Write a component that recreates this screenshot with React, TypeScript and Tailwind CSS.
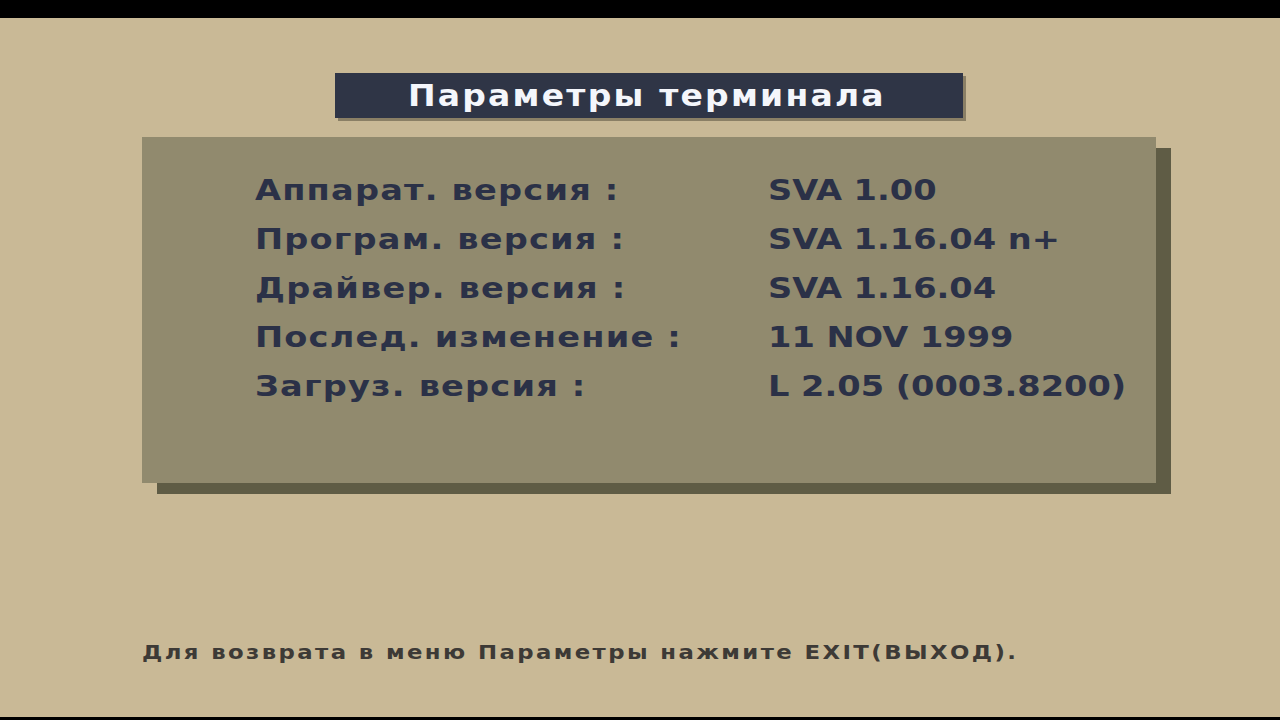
import React from "react";

const rows: [string, string][] = [
  ["Аппарат. версия :", "SVA 1.00"],
  ["Програм. версия :", "SVA 1.16.04 n+"],
  ["Драйвер. версия :", "SVA 1.16.04"],
  ["Послед. изменение :", "11 NOV 1999"],
  ["Загруз. версия :", "L 2.05 (0003.8200)"],
];

export default function App() {
  return (
    <div className="w-[1280px] h-[720px] bg-[#c9b996] flex flex-col overflow-hidden" style={{ fontFamily: '"DejaVu Sans", sans-serif' }}>
      <div className="h-[18px] bg-black shrink-0" />
      <div className="flex-1 flex flex-col">
        <div className="mt-[55px] ml-[335px] w-[628px] h-[45px] bg-[#2f3546] shadow-[3px_3px_0_#8a7f65] flex items-center pl-[73px]">
          <span className="inline-block origin-left scale-x-[1.1] text-[#f4f6fb] text-[30px] font-bold tracking-[2px] leading-none whitespace-nowrap">
            Параметры терминала
          </span>
        </div>
        <div className="mt-[19px] ml-[142px] w-[1014px] h-[346px] bg-[#918a6e] shadow-[15px_11px_0_#5f5c45] pt-[29px]">
          {rows.map(([l, v]) => (
            <div key={l} className="flex h-[49px] items-center text-[#2b3147] font-bold text-[28px] leading-none">
              <div className="ml-[113px] w-[513px]">
                <span className="inline-block origin-left scale-x-[1.2] tracking-[1px] whitespace-nowrap">{l}</span>
              </div>
              <div>
                <span className="inline-block origin-left scale-x-[1.2] tracking-[0px] whitespace-nowrap">{v}</span>
              </div>
            </div>
          ))}
        </div>
        <div className="mt-[160px] ml-[142px] text-[19px] font-bold text-[#3d3a36] leading-none">
          <span className="inline-block origin-left scale-x-[1.2] tracking-[2px] whitespace-nowrap">
            Для возврата в меню Параметры нажмите EXIT(ВЫХОД).
          </span>
        </div>
      </div>
      <div className="h-[3px] bg-black shrink-0" />
    </div>
  );
}
